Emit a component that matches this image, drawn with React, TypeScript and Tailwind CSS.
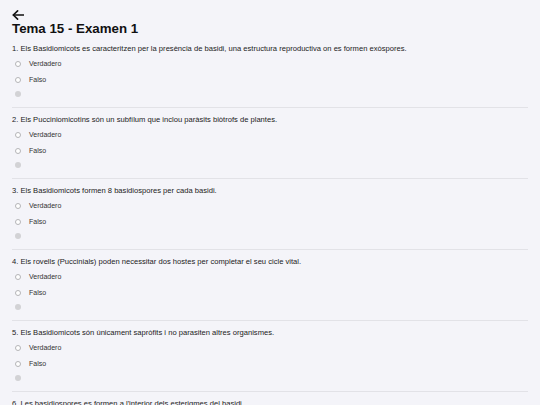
import React from "react";

const questions = [
  "1. Els Basidiomicots es caracteritzen per la presència de basidi, una estructura reproductiva on es formen exòspores.",
  "2. Els Pucciniomicotins són un subfílum que inclou paràsits biòtrofs de plantes.",
  "3. Els Basidiomicots formen 8 basidiospores per cada basidi.",
  "4. Els rovells (Puccinials) poden necessitar dos hostes per completar el seu cicle vital.",
  "5. Els Basidiomicots són únicament sapròfits i no parasiten altres organismes.",
  "6. Les basidiospores es formen a l'interior dels esterigmes del basidi.",
];

function Option({ label }: { label: string }) {
  return (
    <div className="flex items-center h-[10px]">
      <span className="ml-[3px] w-[6px] h-[6px] rounded-full border-[0.5px] border-[#b5b5b8] bg-white" />
      <span className="ml-[8px] text-[7px] leading-[10px] text-[#333]">{label}</span>
    </div>
  );
}

export default function App() {
  return (
    <div
      className="w-[540px] h-[405px] overflow-hidden bg-[#f4f4f9] px-[12px]"
      style={{ fontFamily: '"Liberation Sans", Arial, sans-serif' }}
    >
      <div className="pt-[10px]">
        <svg width="12" height="10" viewBox="0 0 12 10" className="block">
          <path d="M1.4 5 H11.6" stroke="#111" strokeWidth="1.6" fill="none" strokeLinecap="round" />
          <path d="M5.6 0.9 L1.3 5 L5.6 9.1" stroke="#111" strokeWidth="1.6" fill="none" strokeLinecap="round" strokeLinejoin="round" />
        </svg>
      </div>
      <h1 className="mt-[1px] text-[13.3px] leading-[16px] font-bold text-[#111]">Tema 15 - Examen 1</h1>
      <div className="mt-[0px]">
        {questions.map((q, i) => (
          <div key={i}>
            {i > 0 && <div className="h-px bg-[#e2e2e7]" />}
            <div className="pt-[7px]">
              <p className="text-[7.6px] leading-[10px] text-[#222] whitespace-nowrap">{q}</p>
              <div className="mt-[5px]">
                <Option label="Verdadero" />
              </div>
              <div className="mt-[6px]">
                <Option label="Falso" />
              </div>
              <div className="mt-[6px] ml-[3px] w-[6px] h-[6px] rounded-full bg-[#d2d2d5]" />
              <div className="h-[10px]" />
            </div>
          </div>
        ))}
      </div>
    </div>
  );
}
